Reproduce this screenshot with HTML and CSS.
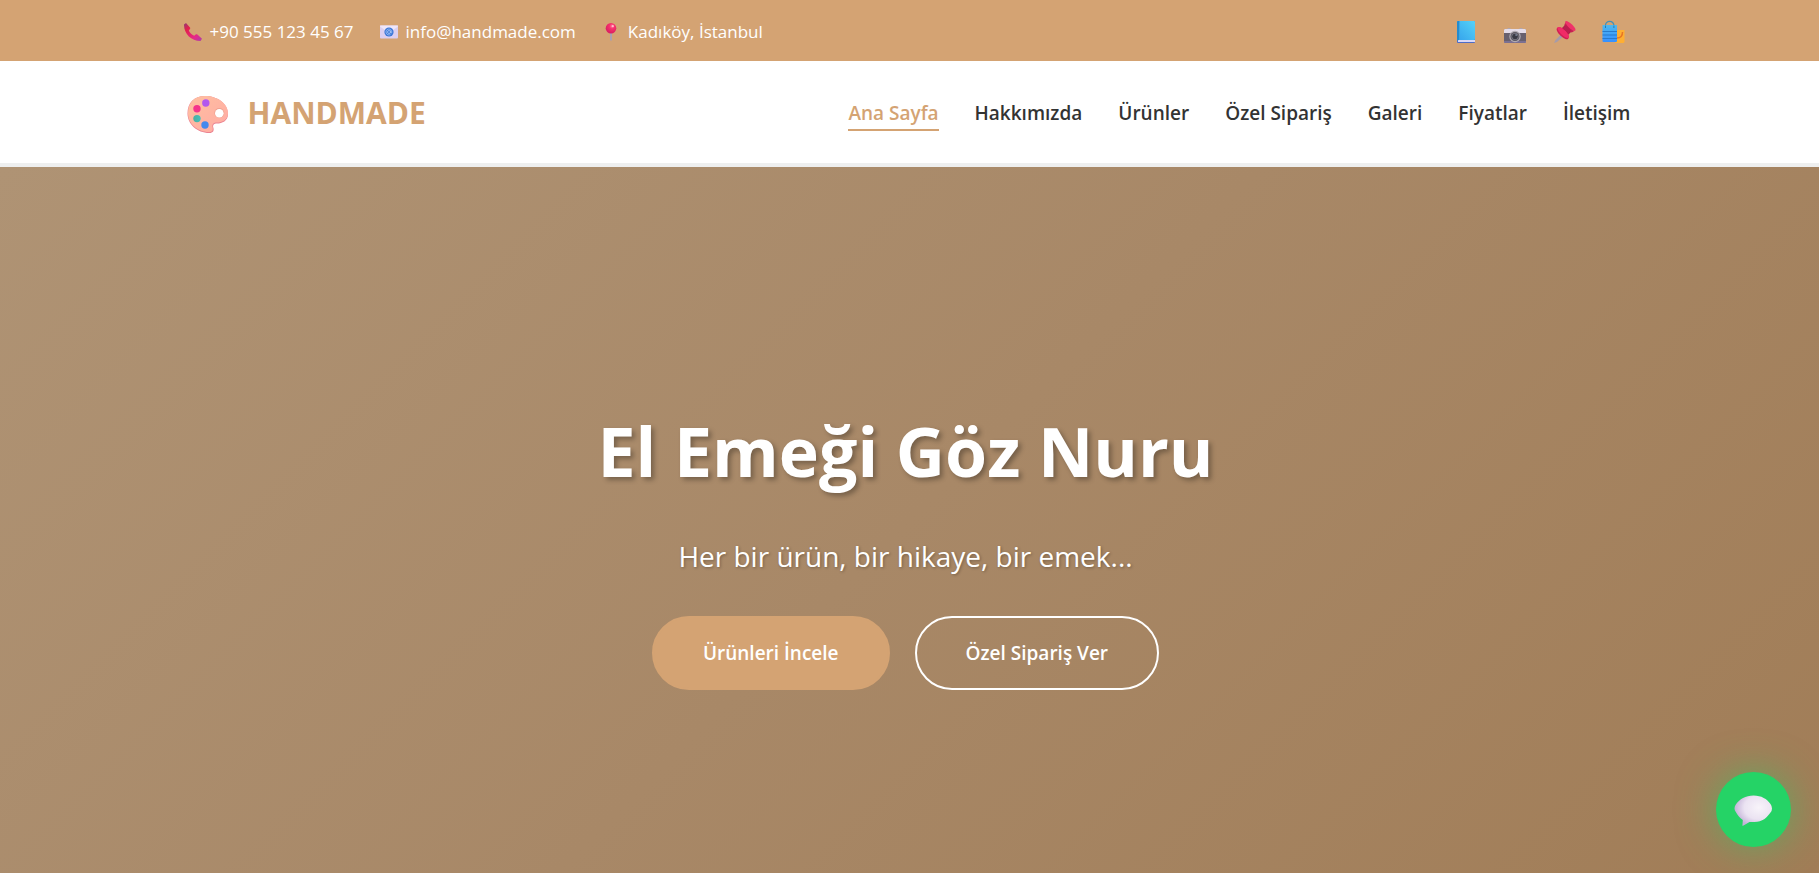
FILE: index.html
```html
<!DOCTYPE html>
<html lang="tr">
<head>
<meta charset="utf-8">
<title>Handmade</title>
<link rel="stylesheet" href="styles.css">
</head>
<body>
<div class="topbar">
  <div class="container topbar-inner">
    <ul class="contact">
      <li>
        <svg class="icon-sm" viewBox="0 0 18 18" aria-hidden="true">
          <defs><linearGradient id="phone" x1="0" y1="0" x2="1" y2="1"><stop offset="0" stop-color="#8c3c78"/><stop offset=".25" stop-color="#e2204b"/><stop offset=".7" stop-color="#e6298a"/><stop offset="1" stop-color="#a83fa8"/></linearGradient></defs>
          <path fill="url(#phone)" d="M0 1.500 2 0l4 4.500c.5.7.3 1.300-.4 2L4.800 7.500c.8 2 2.800 4.200 5.400 5.200l1.200-1c.7-.6 1.400-.6 2-.1L18 15.800 16.500 18C7 18-.2 10.500 0 1.500z"/>
        </svg>
        <span>+90 555 123 45 67</span>
      </li>
      <li>
        <svg class="icon-sm" viewBox="0 0 18 18" aria-hidden="true">
          <rect y="2.500" width="18" height="13" rx="1" fill="#dccff0"/>
          <path d="M0 3.500 9 10l9-6.500v-1H0z" fill="#efe6f8"/>
          <circle cx="9" cy="9" r="4.600" fill="#3d78d8"/>
          <circle cx="9" cy="9" r="1.500" fill="none" stroke="#a9c8f6" stroke-width=".8"/>
          <path d="M10.600 7.500v2.200q1.200 1 1.200-.7a2.900 2.900 0 1 0-1.400 2.500" fill="none" stroke="#a9c8f6" stroke-width=".7"/>
        </svg>
        <span>info@handmade.com</span>
      </li>
      <li>
        <svg class="icon-sm" viewBox="0 0 18 18" aria-hidden="true">
          <defs><radialGradient id="ball" cx=".6" cy=".3" r=".7"><stop offset="0" stop-color="#ff7d9d"/><stop offset=".35" stop-color="#f8316d"/><stop offset="1" stop-color="#d81c62"/></radialGradient></defs>
          <path d="M8 9h2v8l-1 1-1-1z" fill="#aaa0b2"/>
          <circle cx="9" cy="5.300" r="5.300" fill="url(#ball)"/>
          <circle cx="10.800" cy="3.200" r="1.100" fill="#ffc0cb"/>
        </svg>
        <span>Kadıköy, İstanbul</span>
      </li>
    </ul>
    <div class="social">
      <a href="#" aria-label="Facebook">
        <svg class="icon-md" viewBox="0 0 24 24" aria-hidden="true">
          <defs><linearGradient id="book" x1="1" y1="0" x2="0" y2="1"><stop offset="0" stop-color="#55d2f7"/><stop offset="1" stop-color="#35a3ec"/></linearGradient></defs>
          <rect x="3" y="1" width="18" height="22" rx="1" fill="#4d6cc8"/>
          <rect x="4" y="20" width="17" height="2" fill="#d9d8f6"/>
          <rect x="3" y="1" width="18" height="19" rx="1" fill="url(#book)"/>
          <path d="M3 2q0-1 1-1h1v19q-1 0-2 1z" fill="#248bce"/><path d="M5.500 1v19" stroke="#3aa7e3"/>
        </svg>
      </a>
      <a href="#" aria-label="Instagram">
        <svg class="icon-md" viewBox="0 0 24 24" aria-hidden="true">
          <path d="M4.500 9V8h3v1zM16.500 9V8h3v1z" fill="#b0a5ad"/>
          <rect x="1" y="9" width="22" height="14" rx="1" fill="#68606e"/>
          <path d="M2 9h20q1 0 1 1v3H1v-3q0-1 1-1z" fill="#e4dce9"/>
          <path d="M1 21.500h22v1H1z" fill="#8f81b4"/>
          <circle cx="12" cy="16.500" r="5.700" fill="#b1abb2"/><circle cx="12" cy="16.500" r="4.500" fill="#595561"/>
          <circle cx="12" cy="16.500" r="3.300" fill="#393944" stroke="#85828c" stroke-width=".8"/><circle cx="13.200" cy="15" r="1" fill="#767e92"/>
        </svg>
      </a>
      <a href="#" aria-label="Pinterest">
        <svg class="icon-md" viewBox="0 0 24 24" aria-hidden="true">
          <path d="m2 23 1.500-3 6-6 2 2-6.500 6z" fill="#a59baa"/>
          <path d="m9.500 8.500 5-5L21 10l-5 5z" fill="#a91f48"/>
          <path d="M13.500 1.300C15-.5 25 8 23.300 10.500 21.500 13 11.500 4 13.500 1.300z" fill="#ef3269"/>
          <path d="M13.300 2.500c1 3 5.500 7.500 9 8.500l-2.500 1.500c-3-1-6.500-4.500-7.500-7.500z" fill="#c92053"/>
          <path d="M5 8c3-3.500 15 7 11 11-3 2-13.500-7.500-11-11z" fill="#d21e55"/>
          <path d="M5.500 7.500C9 5 19 14.500 16.500 18 13 18.500 5 11.500 5.500 7.500z" fill="#f02c67"/>
          <path d="m10.500 8.500 3-3.500 5.500 5.500-3 3.500q-2-3.500-5.500-5.500z" fill="#b91f4e"/>
        </svg>
      </a>
      <a href="#" aria-label="Mağaza">
        <svg class="icon-md" viewBox="0 0 24 24" aria-hidden="true">
          <defs><linearGradient id="bag" x1="0" y1="0" x2="0" y2="1"><stop offset="0" stop-color="#4fb8ee"/><stop offset="1" stop-color="#3690ff"/></linearGradient></defs>
          <path d="M14 10h9.500v12l-1 1H14z" fill="#ffaf32"/><path d="M21.500 12c0 4-2 6-5.500 6" fill="none" stroke="#e87524" stroke-width="1.500"/>
          <path d="M4.500 8V5.500a4.200 4.200 0 0 1 8.400 0V8" fill="none" stroke="#3d91bd" stroke-width="1.200"/>
          <path d="M1.500 5H16v16q0 1-1 1H2.500q-1 0-1-1z" fill="url(#bag)"/>
          <path d="M1.500 11.500H16M1.500 15H16M1.500 18.500H16" stroke="#287bcc" stroke-width="1.200"/><path d="M4.500 8V5.500M12.900 8V5.500" stroke="#287fae"/>
        </svg>
      </a>
    </div>
  </div>
</div>
<header class="header">
  <div class="container header-inner">
    <a class="logo" href="#">
      <svg class="logo-icon" viewBox="0 0 50 50" aria-hidden="true">
        <defs><linearGradient id="pal" x1="0" y1="0" x2="1" y2="1"><stop offset="0" stop-color="#ffc0a0"/><stop offset="1" stop-color="#ffaaa4"/></linearGradient>
        <linearGradient id="teal" x1="0" y1="0" x2="1" y2="0"><stop offset="0" stop-color="#4cae9f"/><stop offset="1" stop-color="#42c1bd"/></linearGradient></defs>
        <path fill="#eb8290" d="M23 7C36 7 46 15 46 25c0 7-6 9.500-11 9.500-3 0-4.500 1.500-3.700 4 1 3 0 5.500-4 5.500C15 44 5.500 35 5.500 24.500 5.500 14 12 7 23 7z"/>
        <path fill="url(#pal)" d="M23 7C36 7 46 15 46 24c0 7-6 9.500-11 9.500-3.500 0-5.200 2-4.500 4.500.8 3 0 5-3.500 5C15.500 43 6 34.500 6 24.500 6 14 12 7 23 7z"/>
        <circle cx="37.300" cy="24" r="5" fill="#efa291"/><circle cx="37.300" cy="24.300" r="4.300" fill="#fff"/>
        <circle cx="23.800" cy="14" r="3.700" fill="#b257ee"/><circle cx="15" cy="19.700" r="3.700" fill="#f5348b"/><circle cx="15" cy="29.600" r="3.700" fill="url(#teal)"/><circle cx="23" cy="36" r="3.700" fill="#4589ee"/>
      </svg>
      <span>HANDMADE</span>
    </a>
    <nav class="nav">
      <a class="active" href="#">Ana Sayfa</a>
      <a href="#">Hakkımızda</a>
      <a href="#">Ürünler</a>
      <a href="#">Özel Sipariş</a>
      <a href="#">Galeri</a>
      <a href="#">Fiyatlar</a>
      <a href="#">İletişim</a>
    </nav>
  </div>
</header>
<main class="hero">
  <h1>El Emeği Göz Nuru</h1>
  <p>Her bir ürün, bir hikaye, bir emek...</p>
  <div class="actions">
    <a class="btn btn-primary" href="#">Ürünleri İncele</a>
    <a class="btn btn-outline" href="#">Özel Sipariş Ver</a>
  </div>
</main>
<a class="chat" href="#" aria-label="WhatsApp">
  <svg class="chat-icon" viewBox="0 0 40 40" aria-hidden="true">
    <defs><radialGradient id="bub" cx=".65" cy=".4" r=".65"><stop offset="0" stop-color="#f8f4fa"/><stop offset=".6" stop-color="#ebe3f2"/><stop offset="1" stop-color="#c3b2d8"/></radialGradient></defs>
    <path fill="url(#bub)" d="M19.500 5.500c8 0 13.500 3.500 17 8.500q3 4.500 0 8.500c-3.500 5-8 9.500-16 9.500h-5l-6 3.500q-1.500.5-1-1l.3-4.500C5.500 28 3.500 25 1.500 21.500q-2-3 0-6.500C5.500 9 11.500 5.500 19.500 5.500z"/>
  </svg>
</a>
</body>
</html>
```
FILE: styles.css
```css
* { box-sizing: border-box; }

body {
  margin: 0;
  min-height: 100vh;
  display: flex;
  flex-direction: column;
  font-family: "Segoe UI", "Open Sans", "Noto Sans", sans-serif;
  color: #333;
}

a { color: inherit; text-decoration: none; }

.container {
  width: 100%;
  max-width: 1500px;
  margin: 0 auto;
  padding: 0 25px;
}

.topbar, .header, .hero { padding-right: 8px; }

.topbar {
  background: #d4a373;
  color: #fff;
  font-size: 17px;
}

.topbar-inner {
  min-height: 61px;
  padding-top: 2px;
  display: flex;
  align-items: center;
  justify-content: space-between;
}

.contact {
  display: flex;
  gap: 26px;
  margin: 0;
  padding: 0 0 0 3px;
  list-style: none;
}

.contact li { display: flex; align-items: center; gap: 8px; }

.icon-sm { width: 18px; height: 18px; }
.icon-md { display: block; width: 24px; height: 24px; }

.social { display: flex; gap: 25px; padding-right: 6px; }

.header {
  background: #fff;
  border-bottom: 4px solid #eeefef;
}

.header-inner {
  min-height: 102px;
  padding-top: 2px;
  display: flex;
  align-items: center;
  justify-content: space-between;
}

.logo {
  display: flex;
  align-items: center;
  gap: 16px;
  padding-left: 1px;
  color: #d4a373;
  font-size: 30px;
  line-height: 40px;
  font-weight: 700;
}

.logo-icon { width: 50px; height: 50px; margin-top: 2px; }

.nav {
  display: flex;
  gap: 36px;
  font-size: 19px;
  font-weight: 600;
}

.nav a { padding: 6px 0 4px; line-height: 24px; border-bottom: 2px solid transparent; }
.nav .active { color: #d4a373; border-color: #d4a373; }

.hero {
  flex: 1;
  display: flex;
  flex-direction: column;
  align-items: center;
  justify-content: center;
  padding-top: 44px;
  color: #fff;
  text-align: center;
  background: linear-gradient(135deg, #af9374 0%, #a88867 50%, #a17d57 100%);
}

.hero h1 {
  margin: 0 0 25px;
  font-size: 68px;
  line-height: 112px;
  font-weight: 700;
  text-shadow: 3px 3px 5px rgba(0, 0, 0, 0.3);
}

.hero p {
  margin: 0 0 36px;
  font-size: 28px;
  line-height: 48px;
  text-shadow: 1px 1px 3px rgba(0, 0, 0, 0.3);
}

.actions { display: flex; gap: 25px; }

.btn {
  padding: 20px 49px;
  border: 2px solid #d4a373;
  border-radius: 38px;
  font-size: 19px;
  line-height: 30px;
  font-weight: 600;
}

.btn-primary { background: #d4a373; }
.btn-outline { border-color: #fff; }

.chat {
  position: fixed;
  right: 28px;
  bottom: 26px;
  width: 75px;
  height: 75px;
  display: flex;
  align-items: center;
  justify-content: center;
  border-radius: 50%;
  background: #25d366;
  box-shadow: 0 0 38px rgba(37, 211, 102, 0.5);
}

.chat-icon { width: 40px; height: 40px; }
```
